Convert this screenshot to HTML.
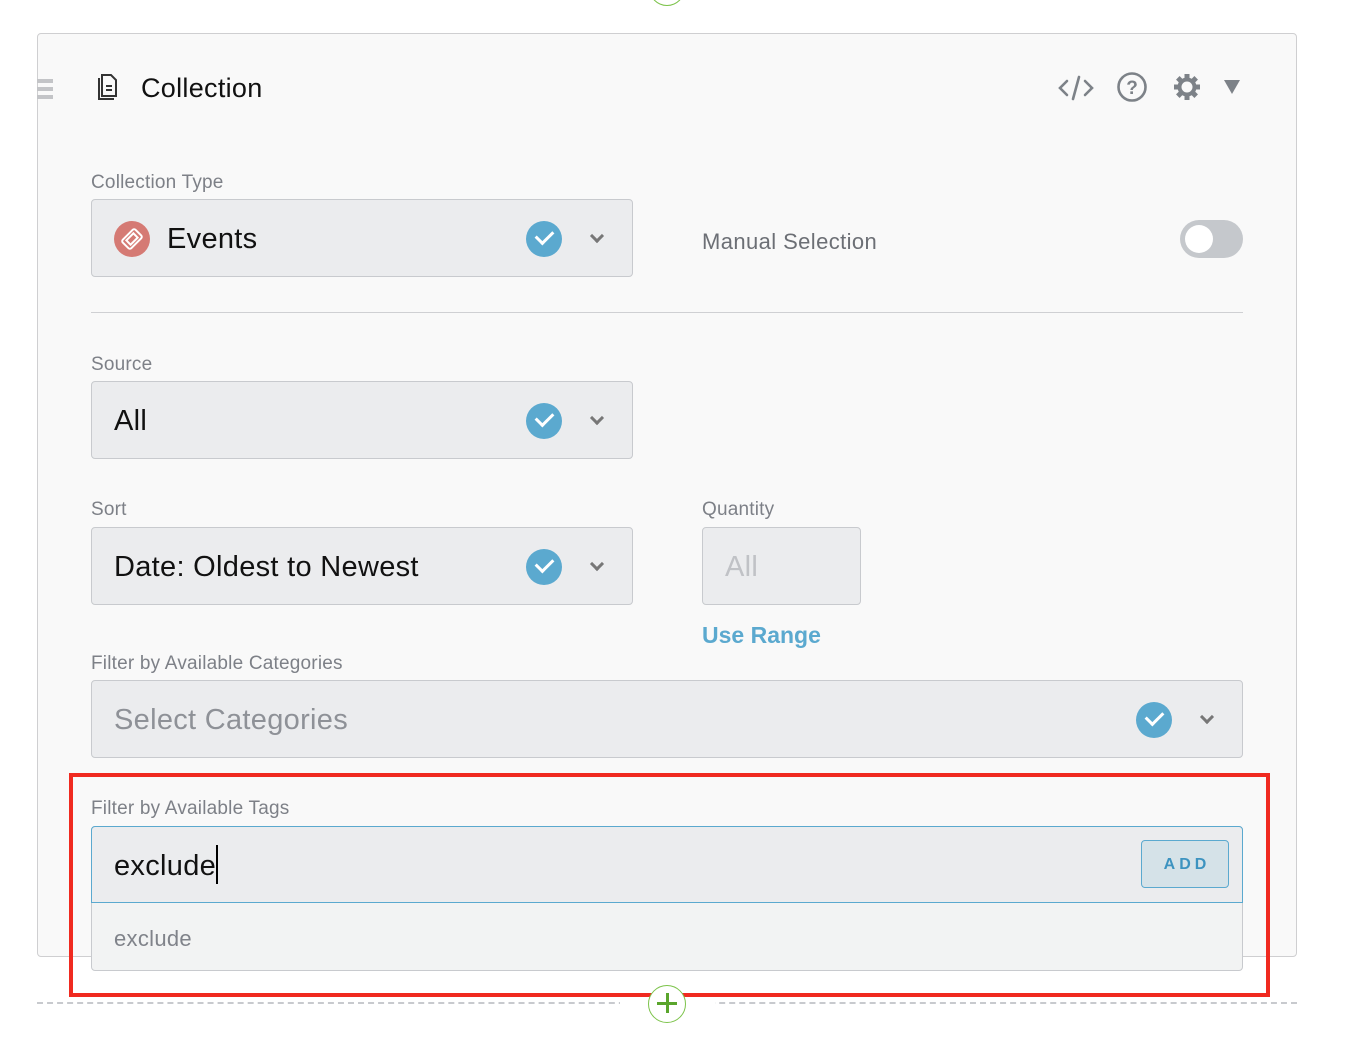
<!DOCTYPE html>
<html><head><meta charset="utf-8"><style>
*{box-sizing:border-box;margin:0;padding:0}
body{width:1348px;height:1038px;background:#fff;font-family:"Liberation Sans",sans-serif;position:relative;overflow:hidden}
.abs{position:absolute}
.panel{left:37px;top:33px;width:1260px;height:924px;background:#f9f9f9;border:1px solid #cfcfd1;border-radius:4px}
.lbl{font-size:19px;color:#7d8087;position:absolute;letter-spacing:0.2px}
.sel{position:absolute;background:#ebecee;border:1px solid #c8cace;border-radius:4px}
.sel .t{position:absolute;left:22px;top:50%;transform:translateY(-46%);font-size:29px;color:#111;letter-spacing:0.3px}
.chk{position:absolute;width:36px;height:36px;border-radius:50%;background:#5ba9cf;top:50%;margin-top:-17px}
.chk:after{content:"";position:absolute;left:10px;top:9px;width:14px;height:8px;border-left:3.5px solid #fff;border-bottom:3.5px solid #fff;transform:rotate(-45deg)}
.chev{position:absolute;top:50%;margin-top:-7px;width:10px;height:10px;border-right:3px solid #777;border-bottom:3px solid #777;transform:rotate(45deg)}
</style></head><body>
<div class="abs" style="left:649px;top:-30px;width:36px;height:36px;border:1.5px solid #7cc34a;border-radius:50%"></div>
<div class="abs panel"></div>
<div class="abs" style="left:37px;top:79px;width:16px;height:4px;background:#c3c4c7"></div>
<div class="abs" style="left:37px;top:87px;width:16px;height:4px;background:#c3c4c7"></div>
<div class="abs" style="left:37px;top:95px;width:16px;height:4px;background:#c3c4c7"></div>
<svg class="abs" style="left:94px;top:73px" width="26" height="28" viewBox="0 0 26 28" fill="none" stroke="#333" stroke-width="2"><path d="M5 5v21h15"/><path d="M8 2h9l5 5v16H8z"/><path d="M12 13h6M12 17h6"/></svg>
<div class="abs" style="left:141px;top:73px;font-size:27px;color:#111;letter-spacing:0.3px">Collection</div>
<svg class="abs" style="left:1057px;top:73px" width="38" height="30" viewBox="0 0 38 30" fill="none" stroke="#7d8288" stroke-width="2.6" stroke-linecap="round"><path d="M10 8l-7 7 7 7M28 8l7 7-7 7M22 4l-6 22"/></svg>
<svg class="abs" style="left:1116px;top:71px" width="32" height="32" viewBox="0 0 32 32"><circle cx="16" cy="16" r="13.5" fill="none" stroke="#7d8288" stroke-width="2.6"/><text x="16" y="23" text-anchor="middle" font-size="19" font-weight="bold" fill="#7d8288" font-family="Liberation Sans">?</text></svg>
<svg class="abs" style="left:1172px;top:72px" width="30" height="30" viewBox="0 0 30 30"><g fill="#7d8288"><circle cx="15" cy="15" r="9.5"/><g id="a"><rect x="12.5" y="2" width="5" height="5"/><rect x="12.5" y="23" width="5" height="5"/></g><use href="#a" transform="rotate(45 15 15)"/><use href="#a" transform="rotate(90 15 15)"/><use href="#a" transform="rotate(135 15 15)"/></g><circle cx="15" cy="15" r="5.5" fill="#f9f9f9"/></svg>
<svg class="abs" style="left:1223px;top:79px" width="18" height="16"><path d="M1 1h16L9 15z" fill="#7d8288"/></svg>

<div class="lbl" style="left:91px;top:172px">Collection Type</div>
<div class="sel" style="left:91px;top:199px;width:542px;height:78px">
<svg class="abs" style="left:22px;top:21px" width="36" height="36" viewBox="0 0 36 36"><circle cx="18" cy="18" r="18" fill="#d57a74"/><g transform="rotate(-45 18 18)" fill="none" stroke="#fff" stroke-width="2"><rect x="9" y="12" width="18" height="12" rx="2"/><rect x="13" y="15" width="10" height="6"/></g></svg>
<div class="t" style="left:75px">Events</div><div class="chk" style="left:434px"></div><div class="chev" style="left:500px"></div></div>
<div class="lbl" style="left:702px;top:229px;font-size:22px;color:#6c6f75;letter-spacing:0.4px">Manual Selection</div>
<div class="abs" style="left:1180px;top:220px;width:63px;height:38px;border-radius:19px;background:#c5c8cc"></div>
<div class="abs" style="left:1185px;top:225px;width:28px;height:28px;border-radius:50%;background:#fff"></div>
<div class="abs" style="left:91px;top:312px;width:1152px;height:1px;background:#cfd0d3"></div>

<div class="lbl" style="left:91px;top:354px">Source</div>
<div class="sel" style="left:91px;top:381px;width:542px;height:78px"><div class="t">All</div><div class="chk" style="left:434px"></div><div class="chev" style="left:500px"></div></div>

<div class="lbl" style="left:91px;top:499px">Sort</div>
<div class="sel" style="left:91px;top:527px;width:542px;height:78px"><div class="t">Date: Oldest to Newest</div><div class="chk" style="left:434px"></div><div class="chev" style="left:500px"></div></div>
<div class="lbl" style="left:702px;top:499px">Quantity</div>
<div class="sel" style="left:702px;top:527px;width:159px;height:78px"><div class="t" style="color:#c0c2c6">All</div></div>
<div class="abs" style="left:702px;top:622px;font-size:23px;font-weight:bold;color:#5ba9cf">Use Range</div>

<div class="lbl" style="left:91px;top:653px">Filter by Available Categories</div>
<div class="sel" style="left:91px;top:680px;width:1152px;height:78px"><div class="t" style="color:#8e9197">Select Categories</div><div class="chk" style="left:1044px"></div><div class="chev" style="left:1110px"></div></div>

<div class="lbl" style="left:91px;top:798px">Filter by Available Tags</div>
<div class="abs" style="left:91px;top:826px;width:1152px;height:145px;background:#f2f3f3;border:1px solid #c8cace;border-radius:4px"></div>
<div class="abs" style="left:91px;top:826px;width:1152px;height:77px;background:#ebecee;border:1px solid #5ba9cf;border-radius:4px 4px 0 0"></div>
<div class="abs" style="left:114px;top:850px;font-size:29px;color:#111;letter-spacing:0.3px">exclude</div>
<div class="abs" style="left:216px;top:845px;width:2px;height:39px;background:#000"></div>
<div class="abs" style="left:1141px;top:840px;width:88px;height:48px;background:#d5e2e8;border:1px solid #5ba9cf;border-radius:4px;font-size:16px;font-weight:bold;color:#3d93c0;letter-spacing:4px;text-align:center;line-height:48px;padding-left:4px">ADD</div>
<div class="abs" style="left:114px;top:926px;font-size:22px;color:#80838a;letter-spacing:0.3px">exclude</div>

<div class="abs" style="left:37px;top:1002px;width:1260px;border-top:2px dashed #c8cace"></div>
<div class="abs" style="left:620px;top:999px;width:95px;height:8px;background:#fff"></div>
<div class="abs" style="left:69px;top:773px;width:1201px;height:224px;border:4.5px solid #f02a20"></div>
<div class="abs" style="left:648px;top:985px;width:38px;height:38px;border:1.5px solid #7cc34a;border-radius:50%;background:#fff"></div>
<div class="abs" style="left:657px;top:1002px;width:20px;height:3px;background:#5aa52c"></div>
<div class="abs" style="left:665.5px;top:993px;width:3px;height:20px;background:#5aa52c"></div>
</body></html>
